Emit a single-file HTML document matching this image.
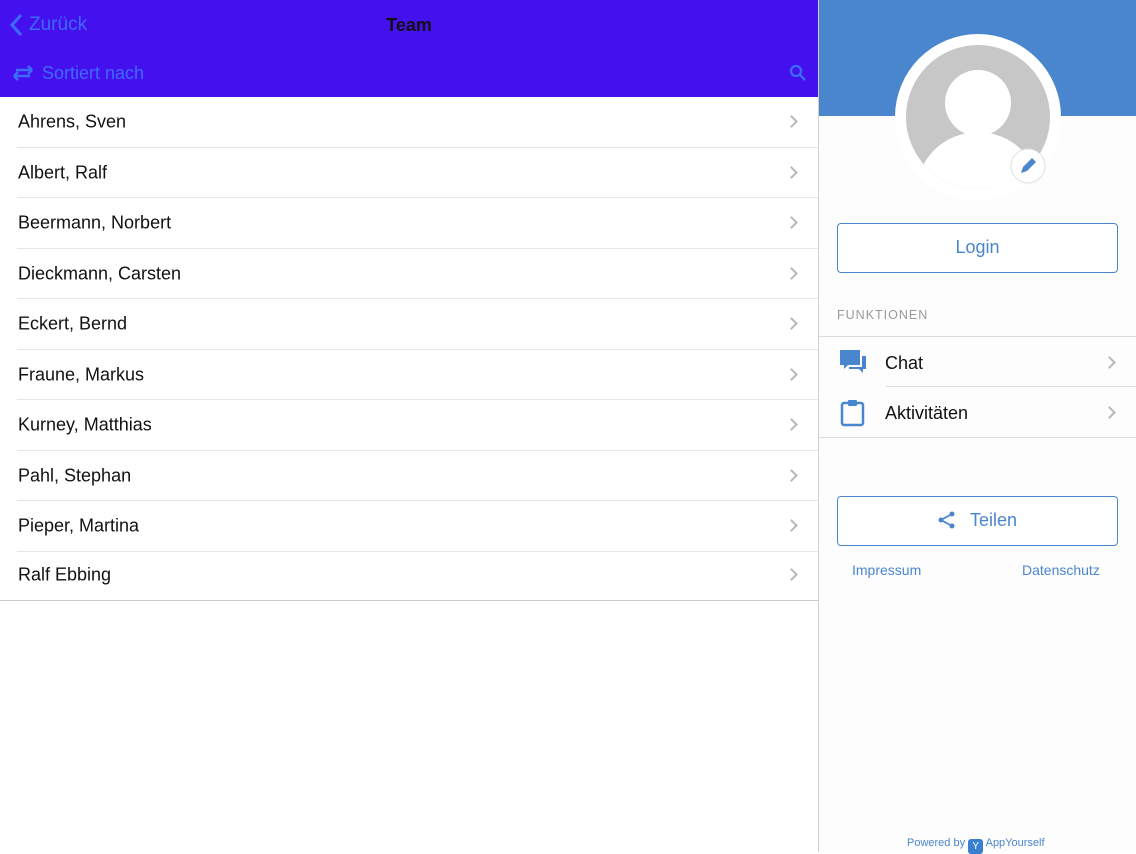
<!DOCTYPE html>
<html><head><meta charset="utf-8"><style>
*{margin:0;padding:0;box-sizing:border-box}
body{width:1136px;height:852px;overflow:hidden;background:#fff;font-family:"Liberation Sans",sans-serif;position:relative}
.abs{position:absolute}
#left{left:0;top:0;width:818px;height:852px}
#hdr{left:0;top:0;width:818px;height:97px;background:#4410EE}
.row{position:absolute;left:0;width:818px;height:50.5px}
.row span{position:absolute;left:18px;top:50%;transform:translateY(-50%);font-size:18px;color:#111}
.row .sep{position:absolute;left:17px;right:0;bottom:0;height:1px;background:#e6e6e6}
.chev{position:absolute;width:9px;height:9px;border-right:2px solid #b8b8b8;border-top:2px solid #b8b8b8;transform:rotate(45deg)}
#right{left:818px;top:0;width:318px;height:852px;border-left:1px solid #d0d0d0;background:#fdfdfd}
.btn{position:absolute;left:18px;width:281px;height:50px;border:1.5px solid #4A86CE;border-radius:4px;color:#4A86CE;font-size:18px;text-align:center;line-height:47px;background:#fff}
</style></head><body>
<div id="left" class="abs">
<div id="hdr" class="abs">
<svg class="abs" style="left:8px;top:13px" width="16" height="24" viewBox="0 0 16 24"><path d="M13 2 L4 12 L13 22" fill="none" stroke="#3D6BFF" stroke-width="3"/></svg>
<div class="abs" style="left:29px;top:14px;font-size:19px;color:#3D6BFF">Zurück</div>
<div class="abs" style="left:0;width:818px;top:15px;text-align:center;font-size:18px;font-weight:bold;color:#111">Team</div>
<svg class="abs" style="left:11px;top:63px" width="24" height="20" viewBox="0 0 24 20"><path d="M3 13h16M3 13l4-4M3 13l4 4M21 7H5M21 7l-4-4M21 7l-4 4" fill="none" stroke="#3D6BFF" stroke-width="2.5"/></svg>
<div class="abs" style="left:42px;top:63px;font-size:18px;color:#3D6BFF">Sortiert nach</div>
<svg class="abs" style="left:789px;top:64px" width="18" height="18" viewBox="0 0 18 18"><circle cx="7" cy="7" r="5" fill="none" stroke="#3D6BFF" stroke-width="2.2"/><path d="M11 11l5 5" stroke="#3D6BFF" stroke-width="2.5"/></svg>
</div>
<div class="row" style="top:97px"><span>Ahrens, Sven</span><i class="chev" style="right:22px;top:20px"></i><div class="sep"></div></div>
<div class="row" style="top:147.5px"><span>Albert, Ralf</span><i class="chev" style="right:22px;top:20px"></i><div class="sep"></div></div>
<div class="row" style="top:198px"><span>Beermann, Norbert</span><i class="chev" style="right:22px;top:20px"></i><div class="sep"></div></div>
<div class="row" style="top:248.5px"><span>Dieckmann, Carsten</span><i class="chev" style="right:22px;top:20px"></i><div class="sep"></div></div>
<div class="row" style="top:299px"><span>Eckert, Bernd</span><i class="chev" style="right:22px;top:20px"></i><div class="sep"></div></div>
<div class="row" style="top:349.5px"><span>Fraune, Markus</span><i class="chev" style="right:22px;top:20px"></i><div class="sep"></div></div>
<div class="row" style="top:400px"><span>Kurney, Matthias</span><i class="chev" style="right:22px;top:20px"></i><div class="sep"></div></div>
<div class="row" style="top:450.5px"><span>Pahl, Stephan</span><i class="chev" style="right:22px;top:20px"></i><div class="sep"></div></div>
<div class="row" style="top:501px"><span>Pieper, Martina</span><i class="chev" style="right:22px;top:20px"></i><div class="sep"></div></div>
<div class="row" style="top:550px"><span>Ralf Ebbing</span><i class="chev" style="right:22px;top:20px"></i><div class="sep" style="left:0;background:#ccc"></div></div>
</div>
<div id="right" class="abs">
<div class="abs" style="left:0;top:0;width:318px;height:116px;background:#4A86CE"></div>
<svg class="abs" style="left:76px;top:34px" width="168" height="168" viewBox="0 0 168 168">
<circle cx="83" cy="83" r="83" fill="#fff"/>
<clipPath id="c"><circle cx="83" cy="83" r="72"/></clipPath>
<circle cx="83" cy="83" r="72" fill="#c7c7c7"/>
<g clip-path="url(#c)"><circle cx="83" cy="69" r="33" fill="#fff"/><ellipse cx="83" cy="160" rx="62" ry="62" fill="#fff"/></g>
<circle cx="133" cy="132" r="17" fill="#fff" stroke="#e0e0e0"/>
<path d="M126 139l2-6 9-9 4 4-9 9z" fill="#4A86CE"/>
</svg>
<div class="btn" style="top:223px">Login</div>
<div class="abs" style="left:18px;top:308px;font-size:12.5px;letter-spacing:1px;color:#999">FUNKTIONEN</div>
<div class="abs" style="left:0;top:336px;width:318px;height:1px;background:#ddd"></div>
<svg class="abs" style="left:20px;top:350px" width="28" height="26" viewBox="0 0 28 26"><path d="M1 0h20v15H9l-4 4v-4H1z" fill="#4A86CE"/><path d="M23 6h4v13h-3v4l-4-4H10v-2h13z" fill="#4A86CE"/></svg>
<div class="abs" style="left:66px;top:353px;font-size:18px;color:#111">Chat</div>
<i class="chev" style="right:22px;top:358px"></i>
<div class="abs" style="left:67px;top:386px;width:251px;height:1px;background:#ddd"></div>
<svg class="abs" style="left:21px;top:399px" width="25" height="28" viewBox="0 0 25 28"><rect x="2" y="4" width="21" height="22" rx="2" fill="none" stroke="#4A86CE" stroke-width="2.5"/><rect x="8" y="1" width="9" height="6" rx="1" fill="#4A86CE"/></svg>
<div class="abs" style="left:66px;top:403px;font-size:18px;color:#111">Aktivitäten</div>
<i class="chev" style="right:22px;top:408px"></i>
<div class="abs" style="left:0;top:437px;width:318px;height:1px;background:#ddd"></div>
<div class="btn" style="top:496px"><svg style="vertical-align:-3px;margin-right:14px" width="18" height="18" viewBox="0 0 18 18"><circle cx="14" cy="3" r="2.5" fill="#4A86CE"/><circle cx="3" cy="9" r="2.5" fill="#4A86CE"/><circle cx="14" cy="15" r="2.5" fill="#4A86CE"/><path d="M14 3L3 9l11 6" fill="none" stroke="#4A86CE" stroke-width="1.8"/></svg>Teilen</div>
<div class="abs" style="left:33px;top:562px;font-size:14px;color:#4A86CE">Impressum</div>
<div class="abs" style="left:203px;top:562px;font-size:14px;color:#4A86CE">Datenschutz</div>
<div class="abs" style="left:88px;top:836px;font-size:11px;color:#4A86CE;line-height:15px">Powered by <span style="display:inline-block;width:15px;height:15px;background:#3A7FD0;color:#fff;border-radius:3px;text-align:center;font-size:10px;line-height:15px;vertical-align:-3px">Y</span> AppYourself</div>
</div>
</body></html>
